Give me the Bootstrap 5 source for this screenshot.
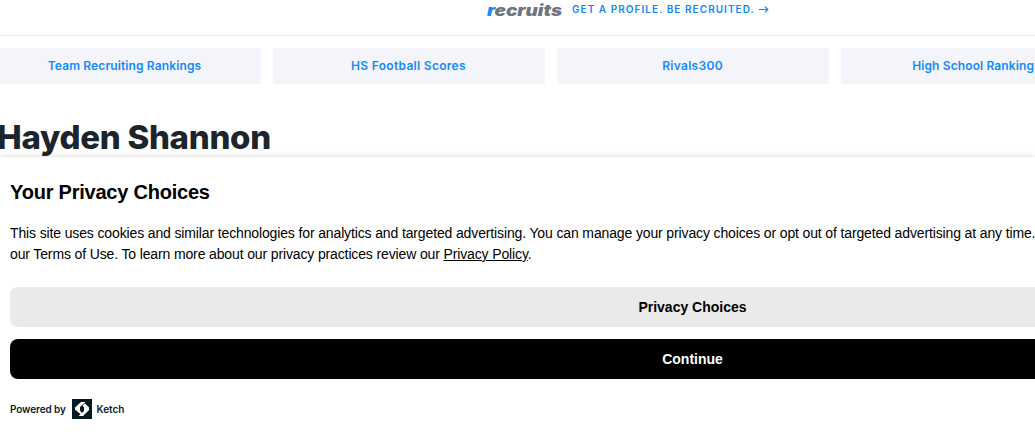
<!DOCTYPE html>
<html lang="en">
<head>
<meta charset="utf-8">
<meta name="viewport" content="width=device-width, initial-scale=1">
<title>Hayden Shannon</title>
<link href="https://cdn.jsdelivr.net/npm/bootstrap@5.3.0/dist/css/bootstrap.min.css" rel="stylesheet">
<style>
  body { height: 435px; background: #fff; font-family: Inter, "Liberation Sans", sans-serif; }
  .promo { height: 36px; border-bottom: 1px solid #e8e9ea; padding-left: 487px; }
  .promo svg.logo { width: 76px; height: 20px; margin-right: 9px; }
  .promo a { height: 20px; line-height: 19px; font-size: 10px; font-weight: 600; letter-spacing: 1.05px; color: #0f87fa; }
  .promo .go { width: 11px; height: 7px; margin: 6px 0 0 3px; }
  .tiles { margin: 12px 0 0 -11px; gap: 12px; }
  .tile { flex: 0 0 272px; height: 36px; border-radius: 2px; background: #f4f5fa; color: #138afa; font-size: 12px; font-weight: 600; letter-spacing: .3px; }
  .tile span { margin-right: 1px; }
  .tile.snug { letter-spacing: .12px; }
  .athlete { height: 73px; margin: 0 0 0 -3px; padding-top: 31px; font-size: 33px; line-height: 44px; font-weight: 800; color: #1c252c; letter-spacing: -.28px; }
  .consent { height: 290px; background: #fff; box-shadow: 0 0 6px rgba(0,0,0,.18); padding: 23px 10px 0; font-family: "Liberation Sans", Arial, sans-serif; color: #000; }
  .sheet { width: 1365px; }
  .consent h2 { font-size: 20px; line-height: 24px; font-weight: 700; margin: 0 0 19px; letter-spacing: -.22px; }
  .consent p { font-size: 14px; line-height: 21px; margin: 0 0 22px; letter-spacing: -.134px; }
  .actions { gap: 12px; }
  .choice { height: 40px; border: 0; border-radius: 8px; font-size: 14px; font-weight: 700; }
  .soft { background: #eaeaea; color: #000; }
  .solid { background: #000; color: #fff; }
  .maker { height: 20px; margin-top: 20px; font-family: Inter, sans-serif; font-size: 10px; font-weight: 600; color: #071a24; }
  .maker .by { width: 62px; letter-spacing: -.1px; }
  .maker svg { margin-right: 4.500px; }
</style>
</head>
<body class="overflow-hidden">
  <header class="promo d-flex align-items-start">
    <svg class="logo" viewBox="0 0 76 20" aria-label="recruits">
      <text x="0" y="15.500" font-family="Inter, sans-serif" font-size="15.500" font-weight="900" font-style="italic" textLength="75" lengthAdjust="spacingAndGlyphs" fill="#6d757e"><tspan fill="#138afa">r</tspan>ecruits</text>
    </svg>
    <a href="#" class="text-decoration-none text-nowrap d-flex"><span>GET A PROFILE. BE RECRUITED.</span>
      <svg class="go" viewBox="0 0 11 7" fill="none" stroke="currentColor" stroke-width="1.200"><path d="M1 3.500H10M7 .7l2.800 2.800L7 6.300"/></svg>
    </a>
  </header>
  <main>
    <nav class="tiles d-flex">
      <a href="#" class="tile snug d-flex align-items-center justify-content-center text-decoration-none"><span>Team Recruiting Rankings</span></a>
      <a href="#" class="tile d-flex align-items-center justify-content-center text-decoration-none"><span>HS Football Scores</span></a>
      <a href="#" class="tile d-flex align-items-center justify-content-center text-decoration-none"><span>Rivals300</span></a>
      <a href="#" class="tile snug d-flex align-items-center justify-content-center text-decoration-none"><span>High School Rankings</span></a>
    </nav>
    <h1 class="athlete">Hayden Shannon</h1>
  </main>
  <section class="consent position-relative">
    <div class="sheet">
      <h2>Your Privacy Choices</h2>
      <p class="text-nowrap">This site uses cookies and similar technologies for analytics and targeted advertising. You can manage your privacy choices or opt out of targeted advertising at any time.<br>our Terms of Use. To learn more about our privacy practices review our <a href="#" class="text-black">Privacy Policy</a>.</p>
      <div class="actions d-flex flex-column">
        <button class="choice soft">Privacy Choices</button>
        <button class="choice solid">Continue</button>
      </div>
      <div class="maker d-flex align-items-center">
        <span class="by">Powered by</span>
        <svg width="20" height="20" viewBox="0 0 20 20"><path fill="#071a24" d="M0 0h20v20H0z"/><path fill="#fff" d="M3 8.500 9 3h4.500L8 8v3.500l1.500 2V16L3 10.500zM13 4.500l4 4v2.500L11 17H6.500l5.500-5V8.500l-1.500-2z"/></svg>
        <span>Ketch</span>
      </div>
    </div>
  </section>
<script src="https://cdn.jsdelivr.net/npm/bootstrap@5.3.0/dist/js/bootstrap.bundle.min.js"></script>
</body>
</html>
